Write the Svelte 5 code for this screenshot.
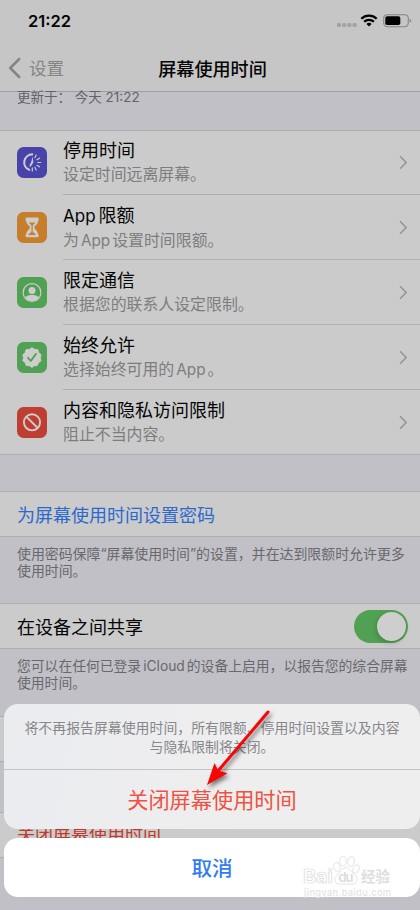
<script>
    let features = [
        { icon: "downtime", color: "#4843a8", title: "停用时间", detail: "设定时间远离屏幕。" },
        { icon: "limits", color: "#c67e2b", latin: "App", title: "限额", before: "为", detailLatin: "App", detail: "设置时间限额。" },
        { icon: "contact", color: "#50a153", title: "限定通信", detail: "根据您的联系人设定限制。" },
        { icon: "allowed", color: "#50a153", title: "始终允许", before: "选择始终可用的", detailLatin: "App", detail: "。" },
        { icon: "blocked", color: "#c03e31", title: "内容和隐私访问限制", detail: "阻止不当内容。" }
    ];

    // short rays on the right half of the downtime clock
    let rays = [-62, -31, 0, 31, 62, 90];

    let sharing = $state(true);
</script>

<div class="screen">
    <header>
        <div class="status">
            <span class="clock">21:22</span>
            <div class="signals">
                <svg width="20" height="5" viewBox="0 0 20 5" fill="#a2a2a2">
                    <rect x="0" y="0" width="4" height="4" rx="1.3" />
                    <rect x="5.2" y="0" width="4" height="4" rx="1.3" />
                    <rect x="10.4" y="0" width="4" height="4" rx="1.3" />
                    <rect x="15.6" y="0" width="4" height="4" rx="1.3" />
                </svg>
                <svg class="wifi" width="18" height="13" viewBox="0 0 18 13">
                    <path d="M1.3 4.8a11 11 0 0 1 15.4 0M4.1 7.8a7 7 0 0 1 9.8 0" fill="none" stroke="#000" stroke-width="2.3" />
                    <path d="M9 12.6 6.4 10a3.7 3.7 0 0 1 5.2 0Z" />
                </svg>
                <svg class="battery" width="29" height="14" viewBox="0 0 29 14">
                    <rect x=".7" y=".7" width="24.6" height="12" rx="3.6" fill="none" stroke="#858585" stroke-width="1.1" />
                    <rect x="2.3" y="2.3" width="15" height="8.8" rx="1.8" />
                    <path d="M26.7 4.8q1.5.5 1.5 1.9t-1.5 1.9Z" fill="#858585" />
                </svg>
            </div>
        </div>
        <nav>
            <div class="back">
                <svg width="13" height="22" viewBox="0 0 13 22">
                    <path d="M11.2 2 2.2 11l9 9" fill="none" stroke="#858585" stroke-width="2.5" stroke-linecap="round" stroke-linejoin="round" />
                </svg>
                <span>设置</span>
            </div>
            <h1>屏幕使用时间</h1>
            <div></div>
        </nav>
    </header>

    <main>
        <p class="updated">更新于： 今天 21:22</p>

        <section class="features">
            {#each features as item}
                <div class="row">
                    <svg class="icon" width="30" height="31" viewBox="0 0 30 31">
                        <rect width="30" height="31" rx="6.5" fill={item.color} />
                        {#if item.icon === "downtime"}
                            <path d="M15.2 7.4a8 8 0 0 0-3 15.4" fill="none" stroke="#cbcbd8" stroke-width="2.1" stroke-linecap="round" />
                            <path d="m15.6 9.6.8 5.9-2.9 4.3-1.2-.7 1.9-4Z" fill="#cbcbd8" />
                            {#each rays as angle}
                                <path d="M20.7 15.5h3" transform="rotate({angle} 15.3 15.5)" stroke="#cbcbd8" stroke-width="1.2" stroke-linecap="round" />
                            {/each}
                        {:else if item.icon === "limits"}
                            <path d="M9.7 5.5h10.8q1.2 0 1.2 1.2l-.2 1.6q-.5 3.5-4 6.2v2q3.5 2.6 4 6.2l.2 1.3q0 1.2-1.2 1.2H9.7q-1.2 0-1.2-1.2l.2-1.3q.5-3.6 4-6.2v-2q-3.5-2.7-4-6.2l-.2-1.6q0-1.2 1.2-1.2Z" fill="#cdcdcd" />
                            <path d="M11.7 10.6h6.8l-2.8 2.9v6.6q2.2.8 3.3 2.9h-7.8q1.1-2.1 3.3-2.9v-6.6Z" fill="#c67e2b" />
                        {:else if item.icon === "contact"}
                            <circle cx="15" cy="15.5" r="8.9" fill="none" stroke="#cdcdcd" stroke-width="1.2" />
                            <circle cx="15" cy="13.4" r="3.5" fill="#cdcdcd" />
                            <path d="M8 20.2q2-2 5-2.3h4q3 .3 5 2.3A8.5 8.5 0 0 1 8 20.2Z" fill="#cdcdcd" />
                        {:else if item.icon === "allowed"}
                            <path d="m15 5.7 2.7 1.7 3.1.3.9 3 2.4 2.1-.8 2.9.7 3.1-2.6 1.9-1.2 2.9-3.1.1-2.1 1.7-2.5-1.7-3.2-.1-1-2.9-2.5-2 .8-3-.8-2.9 2.4-2.1.9-3 3.1-.3Z" fill="#cdcdcd" stroke="#cdcdcd" stroke-linejoin="round" />
                            <path d="m11 15.8 2.8 3.1 5.2-7" fill="none" stroke="#50a153" stroke-width="1.8" stroke-linecap="round" stroke-linejoin="round" />
                        {:else}
                            <circle cx="15" cy="15.3" r="8.1" fill="none" stroke="#cdcdcd" stroke-width="1.9" />
                            <path d="m9.3 9.6 11.4 11.4" stroke="#cdcdcd" stroke-width="1.9" />
                        {/if}
                    </svg>
                    <div class="body">
                        <div class="text">
                            <span class="title">{#if item.latin}<span class="latin">{item.latin}</span>{/if}{item.title}</span>
                            <span class="detail">{item.before ?? ""}{#if item.detailLatin}<span class="latin">{item.detailLatin}</span>{/if}{item.detail}</span>
                        </div>
                        <svg class="chevron" width="9" height="15" viewBox="0 0 9 15">
                            <path d="m1.5 1.7 5.7 5.8-5.7 5.8" fill="none" stroke="#949496" stroke-width="1.6" stroke-linecap="round" stroke-linejoin="round" />
                        </svg>
                    </div>
                </div>
            {/each}
        </section>

        <section class="single passcode">为屏幕使用时间设置密码</section>
        <p class="note">使用密码保障“屏幕使用时间”的设置，并在达到限额时允许更多<br />使用时间。</p>

        <section class="single share">
            <span>在设备之间共享</span>
            <button class="switch" class:on={sharing} aria-label="在设备之间共享" onclick={() => (sharing = !sharing)}>
                <i></i>
            </button>
        </section>
        <p class="note second">您可以在任何已登录<span class="cloud">iCloud</span>的设备上启用，以报告您的综合屏幕<br />使用时间。</p>

        <section class="single"></section>
        <section class="single off">关闭屏幕使用时间</section>
    </main>

    <div class="sheet">
        <div class="card actions">
            <p>将不再报告屏幕使用时间，所有限额、停用时间设置以及内容<br />与隐私限制将关闭。</p>
            <button class="destructive">关闭屏幕使用时间</button>
        </div>
        <button class="card cancel">取消</button>
    </div>

    <svg class="arrow" width="90" height="90" viewBox="195 705 90 90">
        <path d="M268 712 218 771" stroke="#f80505" stroke-width="3" stroke-linecap="round" />
        <path d="m207 785 7.5-22 3.7 7.4 9.3 2.8Z" fill="#f80505" />
    </svg>

    <svg class="watermark" width="100" height="46" viewBox="300 853 100 46">
        <g fill="#fff" stroke="#dadada" stroke-width=".7">
            <text x="303" y="883" font-size="19" font-weight="700" textLength="30" lengthAdjust="spacingAndGlyphs">Bai</text>
            <ellipse cx="337" cy="867" rx="3.2" ry="4.5" transform="rotate(-15 337 867)" />
            <ellipse cx="343" cy="861" rx="3.2" ry="4.8" />
            <ellipse cx="351" cy="861.5" rx="3.2" ry="4.8" transform="rotate(12 351 861.5)" />
            <ellipse cx="356" cy="869" rx="3" ry="4.4" transform="rotate(25 356 869)" />
            <path d="M346 867.5q3 0 5.2 3.5l4.2 4.2q3.6 4.4.3 8-1.3 1.3-4.7.9h-10q-3.6.3-5-1.2-2.8-3.5.8-7.5l4.2-4.5q2-3.4 5-3.4Z" />
        </g>
        <text x="338.5" y="881.5" font-size="13" font-weight="600" textLength="15" fill="#dcdcdc">du</text>
        <text x="361" y="882" font-size="14.5" font-weight="700" textLength="29" fill="#dedede">经验</text>
        <text x="304" y="895.5" font-size="9.2" font-weight="500" textLength="87" fill="#e4e4e4">jingyan.baidu.com</text>
    </svg>
</div>

<style>
    :global(body) {
        margin: 0;
    }

    .screen {
        position: relative;
        width: 420px;
        height: 910px;
        overflow: hidden;
        background: #c1c0c6;
        font-family: Inter, "Noto Sans CJK SC", sans-serif;
        color: #050505;
        white-space: nowrap;
    }

    p, h1 {
        margin: 0;
        font-weight: 400;
    }

    button {
        border: none;
        padding: 0;
        font-family: inherit;
    }

    svg {
        display: block;
        flex: none;
    }

    header {
        box-sizing: border-box;
        height: 92px;
        background: #c6c6c6;
        border-bottom: 1px solid #9e9ea1;
    }

    .status {
        display: flex;
        justify-content: space-between;
        height: 46px;
        padding: 0 8px 0 28px;
    }

    .clock {
        font-size: 16.5px;
        line-height: 42px;
        font-weight: 600;
    }

    .signals {
        display: flex;
        align-items: center;
        height: 41px;
    }

    .signals svg:first-child {
        margin-top: 9px;
    }

    .wifi {
        margin: 0 5px 0 3px;
    }

    nav {
        display: grid;
        grid-template-columns: 1fr auto 1fr;
        align-items: center;
        width: 425px;
        height: 43px;
    }

    .back {
        display: flex;
        align-items: center;
        gap: 8px;
        padding-left: 8px;
        font-size: 17.6px;
        color: #858585;
    }

    h1 {
        font-size: 18.1px;
        font-weight: 500;
    }

    .updated {
        height: 38px;
        padding-left: 17px;
        font-size: 13.5px;
        line-height: 10px;
        color: #626267;
    }

    section {
        box-sizing: border-box;
        background: #cbcbcb;
        border-top: 1px solid #afafb2;
        border-bottom: 1px solid #afafb2;
    }

    .row {
        display: flex;
        align-items: center;
        gap: 16px;
        height: 65px;
        padding-left: 17px;
    }

    .features {
        height: 325px;
    }

    .row:first-child {
        height: 64px;
    }

    .icon {
        margin-bottom: 1px;
    }

    .body {
        box-sizing: border-box;
        display: flex;
        flex: 1;
        justify-content: space-between;
        height: 100%;
        padding-right: 12px;
        border-bottom: 1px solid #b0b0b2;
    }

    .row:last-child .body {
        border-bottom: none;
    }

    .text {
        display: flex;
        flex-direction: column;
        padding-top: 8px;
    }

    .row:first-child .text {
        padding-top: 7px;
    }

    .title {
        font-size: 18px;
        line-height: 25px;
    }

    .detail {
        font-size: 15.9px;
        line-height: 23px;
        color: #7d7d7f;
    }

    .latin {
        margin-right: 3px;
        font-size: 17px;
    }

    .detail .latin {
        margin: 0 2px;
        font-size: 15.3px;
    }

    .chevron {
        align-self: center;
    }

    .single {
        display: flex;
        align-items: center;
        justify-content: space-between;
        height: 46px;
        padding: 0 12px 0 17px;
        font-size: 18px;
    }

    .passcode {
        margin-top: 36px;
        padding-bottom: 1px;
        color: #2d68cb;
    }

    .note {
        height: 66px;
        padding: 9px 0 0 17px;
        box-sizing: border-box;
        font-size: 13.92px;
        line-height: 17px;
        color: #68686d;
    }

    .second {
        height: 67px;
        font-size: 13.8px;
    }

    .cloud {
        margin: 0 2px;
    }

    .switch {
        display: flex;
        box-sizing: border-box;
        width: 54px;
        height: 33px;
        padding: 2px;
        border-radius: 17px;
        background: #aaaaae;
    }

    .switch.on {
        justify-content: flex-end;
        background: #50a153;
    }

    .switch i {
        width: 29px;
        height: 29px;
        border-radius: 50%;
        background: #cecece;
        box-shadow: -1px 2px 5px rgba(0, 0, 0, .18);
    }

    .off {
        margin-top: 50px;
        padding-bottom: 4px;
        color: #c0392d;
    }

    .sheet {
        position: absolute;
        top: 704px;
        left: 4px;
        display: flex;
        flex-direction: column;
        gap: 9px;
        width: 416px;
    }

    .card {
        border-radius: 14px;
        overflow: hidden;
    }

    .actions {
        height: 125px;
        background: linear-gradient(100deg, #ebecf0, #eee 60%);
        text-align: center;
    }

    .actions p {
        box-sizing: border-box;
        height: 65px;
        padding-top: 15px;
        font-size: 13.9px;
        line-height: 18.5px;
        color: #87878b;
    }

    .destructive {
        width: 100%;
        height: 60px;
        padding-bottom: 3px;
        border-top: 1px solid #c4c4c8;
        background: none;
        font-size: 21.2px;
        color: #f05143;
    }

    .cancel {
        height: 59px;
        padding-bottom: 2px;
        background: #fff;
        font-size: 20.6px;
        font-weight: 500;
        color: #327bf5;
    }

    .arrow {
        position: absolute;
        top: 705px;
        left: 195px;
        filter: drop-shadow(2px 3px 2px rgba(0, 0, 0, .5));
    }

    .watermark {
        position: absolute;
        top: 853px;
        left: 300px;
    }
</style>
